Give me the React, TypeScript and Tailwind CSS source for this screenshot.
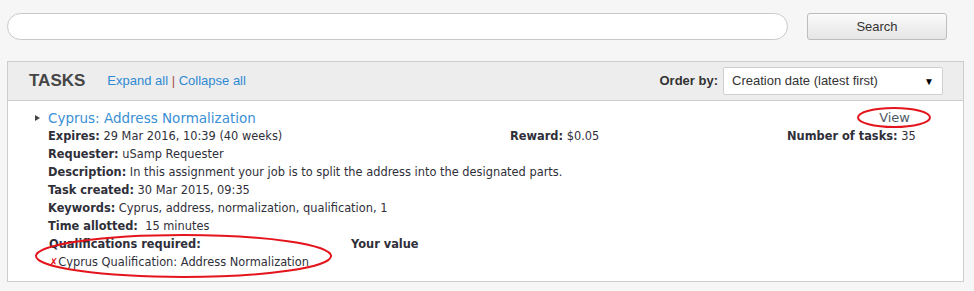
function Ring({ w, h }: { w: number; h: number }) {
  return (
    <svg width={w} height={h} viewBox={`0 0 ${w} ${h}`} className="block">
      <ellipse cx={w / 2} cy={h / 2} rx={w / 2 - 1} ry={h / 2 - 1} fill="none" stroke="#e3141b" strokeWidth="2" />
    </svg>
  );
}

export default function App() {
  return (
    <div className="min-h-[291px] w-[974px] bg-[#f6f6f6] font-['Liberation_Sans',Arial,sans-serif]">
      <div className="flex pl-[7px] pt-[13px]">
        <input className="h-[27px] w-[781px] rounded-full border border-[#c9c9c9] bg-white px-3 outline-none" />
        <button className="ml-[19px] h-[27px] w-[140px] rounded-[3px] border border-[#bdbdbd] bg-gradient-to-b from-[#fbfbfb] to-[#e5e5e5] text-[13px] text-[#333]">
          Search
        </button>
      </div>

      <div className="ml-[7px] mt-[21px] w-[957px] border border-[#cdcdcd] bg-white">
        <div className="flex h-[39px] items-center border-b border-[#cdcdcd] bg-[#ededed] pl-[21px] pr-[20px]">
          <span className="text-[17px] font-bold text-[#454545]">TASKS</span>
          <span className="ml-[22px] text-[13px] text-[#2f8ad3]">
            Expand all <span className="text-[#a5524a]">|</span> Collapse all
          </span>
          <span className="ml-auto mr-[5px] text-[13px] font-bold text-[#333]">Order by:</span>
          <div className="flex h-[28px] w-[220px] items-center justify-between rounded-[2px] border border-[#cfcfcf] bg-white pl-[8px] pr-[8px] text-[13px] text-[#333]">
            <span>Creation date (latest first)</span>
            <span className="text-[10px] text-black">▼</span>
          </div>
        </div>

        <div className="pb-[9px] pt-[8px] font-['DejaVu_Sans',Verdana,sans-serif] text-[11.4px] leading-[18px] text-[#2f2f3a]">
          <div className="relative flex items-center">
            <span className="ml-[27px] mr-[8px] h-0 w-0 border-y-[3.5px] border-l-[5px] border-y-transparent border-l-[#444]" />
            <span className="text-[13.5px] text-[#3a8fd4]">Cyprus: Address Normalization</span>
            <span className="ml-auto mr-[53px] text-[13px] text-[#4f5a66]">View</span>
            <div className="absolute left-[849px] top-[-2px]">
              <Ring w={74} h={21} />
            </div>
          </div>
          <div className="flex pl-[40px]">
            <div className="w-[462px]">
              <b>Expires:</b> 29 Mar 2016, 10:39 (40 weeks)
            </div>
            <div className="w-[277px]">
              <b>Reward:</b> $0.05
            </div>
            <div>
              <b>Number of tasks:</b> 35
            </div>
          </div>
          <div className="pl-[40px]">
            <b>Requester:</b> uSamp Requester
          </div>
          <div className="pl-[40px]">
            <b>Description:</b> In this assignment your job is to split the address into the designated parts.
          </div>
          <div className="pl-[40px]">
            <b>Task created:</b> 30 Mar 2015, 09:35
          </div>
          <div className="pl-[40px]">
            <b>Keywords:</b> Cyprus, address, normalization, qualification, 1
          </div>
          <div className="pl-[40px]">
            <b>Time allotted:</b>&nbsp; 15 minutes
          </div>
          <div className="relative flex pl-[41px]">
            <div className="w-[302px]">
              <b>Qualifications required:</b>
              <div>
                <span className="text-[11px] text-[#e3141b]">✗</span>Cyprus Qualification: Address Normalization
              </div>
            </div>
            <b>Your value</b>
            <div className="absolute left-[27px] top-[-1px]">
              <Ring w={297} h={44} />
            </div>
          </div>
        </div>
      </div>
    </div>
  );
}
